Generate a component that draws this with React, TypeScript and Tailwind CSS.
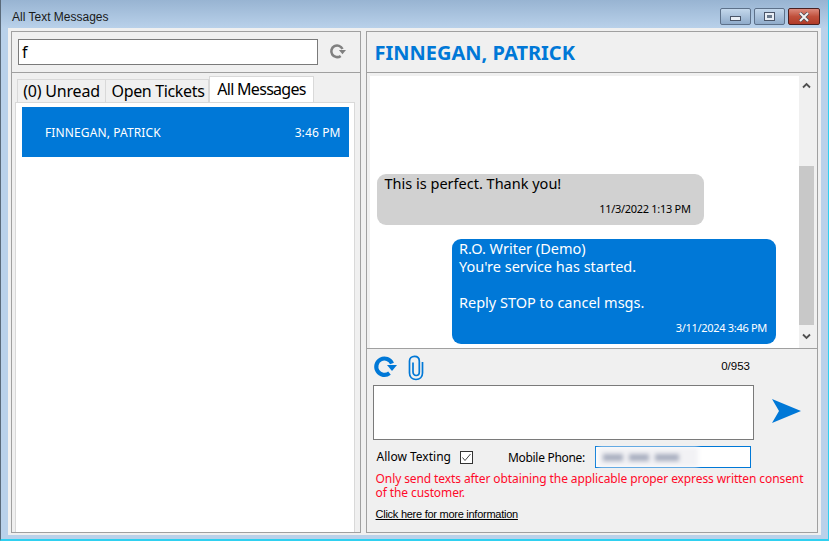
function RefreshIcon({ color, size, width }: { color: string; size: number; width: number }) {
  return (
    <svg width={size} height={size} viewBox="0 0 24 24" fill="none">
      <path d="M16.5 18.2A8.2 8.2 0 1 1 19 8.5" stroke={color} strokeWidth={width} />
      <path d="M14 10H24L19 16Z" fill={color} />
    </svg>
  );
}

function App() {
  return (
    <div className="w-[829px] h-[541px] flex flex-col overflow-hidden bg-[#b9d1ea] border-l border-l-[#5a6a7a] border-b-2 border-b-[#2fd0f0] border-r border-r-[#2fd0f0] font-['Noto_Sans',sans-serif] text-black">
      <div className="h-[28px] shrink-0 flex items-start justify-between pl-[11px] pr-[8px] bg-gradient-to-b from-[#98b4d2] to-[#b9d1ea]">
        <div className="text-[12px] leading-none mt-[11px] font-['Liberation_Sans',sans-serif] text-[#1a1a1a]">All Text Messages</div>
        <div className="flex gap-[3px] mt-[8px]">
          <div className="w-[31px] h-[17px] rounded-[2px] border border-[#5d718a] bg-gradient-to-b from-[#c4d8ec] to-[#8fabca] flex items-center justify-center">
            <div className="w-[11px] h-[5px] mt-[3px] bg-[#e8eef5] border border-[#4a5568]"></div>
          </div>
          <div className="w-[31px] h-[17px] rounded-[2px] border border-[#5d718a] bg-gradient-to-b from-[#c4d8ec] to-[#8fabca] flex items-center justify-center">
            <div className="w-[11px] h-[9px] bg-[#e8eef5] border border-[#4a5568] flex items-center justify-center">
              <div className="w-[5px] h-[3px] bg-[#6b7a8c]"></div>
            </div>
          </div>
          <div className="w-[32px] h-[17px] rounded-[2px] border border-[#4a2020] bg-gradient-to-b from-[#dc8a7c] via-[#c0503c] to-[#b03a28] flex items-center justify-center">
            <svg width="12" height="10" viewBox="0 0 12 10">
              <path d="M2 1L10 9M10 1L2 9" stroke="#4a4a55" strokeWidth="3.4" />
              <path d="M2 1L10 9M10 1L2 9" stroke="#f2f2f2" strokeWidth="2" />
            </svg>
          </div>
        </div>
      </div>

      <div className="flex-1 min-h-0 mx-[7px] mb-[4px] bg-[#f0f0f0] flex gap-[5px] px-[3px] pt-[3px] pb-[2px]">
        {/* left side */}
        <div className="w-[350px] flex flex-col border border-[#a0a0a0]">
          <div className="h-[41px] shrink-0 flex items-center pl-[6px] border-b border-[#a0a0a0]">
            <div className="w-[300px] h-[26px] bg-white border border-[#7a7a7a] flex items-center pl-[3px] text-[16px] leading-none">f</div>
            <div className="ml-[11px] mt-[-1px]">
              <RefreshIcon color="#808080" size={17} width={3.6} />
            </div>
          </div>
          <div className="flex-1 min-h-0 flex flex-col pl-[3px] pr-[5px] pt-[3px]">
            <div className="flex items-end pl-[2px] h-[26px] shrink-0 text-[16px] leading-none tracking-[-0.2px]">
              <div className="w-[89px] h-[23px] flex items-center justify-center bg-[#f0f0f0] border border-b-0 border-[#d9d9d9]">(0) Unread</div>
              <div className="w-[103px] h-[23px] pl-[2px] flex items-center justify-center bg-[#f0f0f0] border-t border-r border-[#d9d9d9] tracking-[-0.35px]">Open Tickets</div>
              <div className="w-[105px] h-[26px] pb-[2px] flex items-center justify-center bg-white border border-b-0 border-[#d9d9d9] tracking-[-0.7px]">All Messages</div>
            </div>
            <div className="flex-1 bg-white border border-b-0 border-[#d9d9d9] pl-[6px] pr-[5px] pt-[4px]">
              <div className="h-[50px] pt-[1px] bg-[#0078d7] flex items-center justify-between pl-[23px] pr-[8px] text-white text-[12px] leading-none tracking-[0.12px]">
                <span>FINNEGAN, PATRICK</span>
                <span>3:46 PM</span>
              </div>
            </div>
          </div>
        </div>

        {/* right side */}
        <div className="w-[453px] flex flex-col border border-[#a0a0a0]">
          <div className="h-[41px] shrink-0 flex items-center pl-[8px] pt-[1px] border-b border-[#a0a0a0] text-[#0078d7] text-[20px] font-bold leading-none">
            FINNEGAN, PATRICK
          </div>
          <div className="h-[276px] shrink-0 flex pl-[3px] pt-[3px] pr-[3px] border-b border-[#a0a0a0]">
            <div className="flex-1 bg-white flex flex-col justify-end pl-[7px] pr-[23px] pb-[3px]">
              <div className="w-[327px] h-[51px] mb-[14px] rounded-[9px] bg-[#d1d1d1] flex flex-col pl-[8px] pr-[13px]">
                <div className="text-[14.5px] leading-[19px]">This is perfect. Thank you!</div>
                <div className="text-right text-[11px] leading-none mt-[10px] tracking-[-0.3px]">11/3/2022 1:13 PM</div>
              </div>
              <div className="w-[324px] h-[105px] self-end rounded-[9px] bg-[#0078d7] text-white flex flex-col pl-[7px] pr-[9px] mb-[1px]">
                <div className="text-[14.5px] leading-[18px]">R.O. Writer (Demo)</div>
                <div className="text-[14.5px] leading-[18px]">You're service has started.</div>
                <div className="text-[14.5px] leading-[18px] mt-[18px]">Reply STOP to cancel msgs.</div>
                <div className="text-right text-[11px] leading-none mt-[11px] tracking-[-0.3px]">3/11/2024 3:46 PM</div>
              </div>
            </div>
            <div className="w-[15px] flex flex-col items-center">
              <div className="h-[18px] w-full flex items-center justify-center">
                <svg width="9" height="7" viewBox="0 0 9 7" fill="none">
                  <path d="M1 5.5L4.5 2L8 5.5" stroke="#505050" strokeWidth="1.8" />
                </svg>
              </div>
              <div className="h-[72px]"></div>
              <div className="w-full h-[159px] bg-[#c8c8c8]"></div>
              <div className="flex-1 w-full flex items-center justify-center">
                <svg width="9" height="7" viewBox="0 0 9 7" fill="none">
                  <path d="M1 1.5L4.5 5L8 1.5" stroke="#505050" strokeWidth="1.8" />
                </svg>
              </div>
            </div>
          </div>

          <div className="flex-1 min-h-0 flex flex-col pl-[6px]">
            <div className="h-[36px] shrink-0 flex items-center">
              <RefreshIcon color="#0078d7" size={24} width={4.2} />
              <svg className="ml-[10px] mt-[1px]" width="18" height="26" viewBox="0 0 18 26" fill="none">
                <path d="M15.5 7V18C15.5 22 12.8 24.5 9 24.5C5.2 24.5 2.5 22 2.5 18V6C2.5 3.2 4.6 1.3 7.5 1.3C10.4 1.3 12.3 3.2 12.3 6V17C12.3 19 11 20.5 9.2 20.5C7.4 20.5 6 19 6 17V7.5" stroke="#0078d7" strokeWidth="1.7" />
              </svg>
              <div className="ml-auto mr-[67px] text-[11.5px] leading-none font-['Liberation_Sans',sans-serif]">0/953</div>
            </div>
            <div className="flex items-center">
              <div className="w-[381px] h-[55px] bg-white border border-[#7a7a7a]"></div>
              <svg className="ml-[18px] mt-[-3px]" width="29" height="24" viewBox="0 0 29 24">
                <polygon points="0,0 29,12 0,24 7,12" fill="#0078d7" />
              </svg>
            </div>
            <div className="flex items-center h-[24px] mt-[5px] text-[12px] leading-none">
              <span className="ml-[4px]">Allow Texting</span>
              <div className="ml-[9px] w-[13px] h-[13px] border border-[#333] bg-white flex items-center justify-center">
                <svg width="11" height="11" viewBox="0 0 11 11" fill="none">
                  <path d="M1.5 5.5L4 8.5L9.5 2" stroke="#444" strokeWidth="1" />
                </svg>
              </div>
              <span className="ml-[35px] mt-[2px] tracking-[-0.3px]">Mobile Phone:</span>
              <div className="ml-[10px] w-[156px] h-[22px] bg-white border border-[#0078d7] flex items-center pl-[2px]">
                <div className="w-[100px] h-[20px] flex items-center gap-[6px] pl-[5px] bg-[#f2f2f5] blur-[2px]">
                  <div className="w-[20px] h-[7px] bg-[#a9afc0]"></div>
                  <div className="w-[20px] h-[7px] bg-[#a9afc0]"></div>
                  <div className="w-[24px] h-[7px] bg-[#a9afc0]"></div>
                </div>
              </div>
            </div>
            <div className="mt-[3px] ml-[3px] w-[432px] text-[12px] leading-[14px] text-[#ff0a2a] tracking-[-0.1px]">
              Only send texts after obtaining the applicable proper express written consent of the customer.
            </div>
            <div className="mt-[7px] ml-[3px] text-[11px] leading-[14px] underline font-['Liberation_Sans',sans-serif] tracking-[-0.26px]">Click here for more information</div>
          </div>
        </div>
      </div>
    </div>
  );
}

export default App;
